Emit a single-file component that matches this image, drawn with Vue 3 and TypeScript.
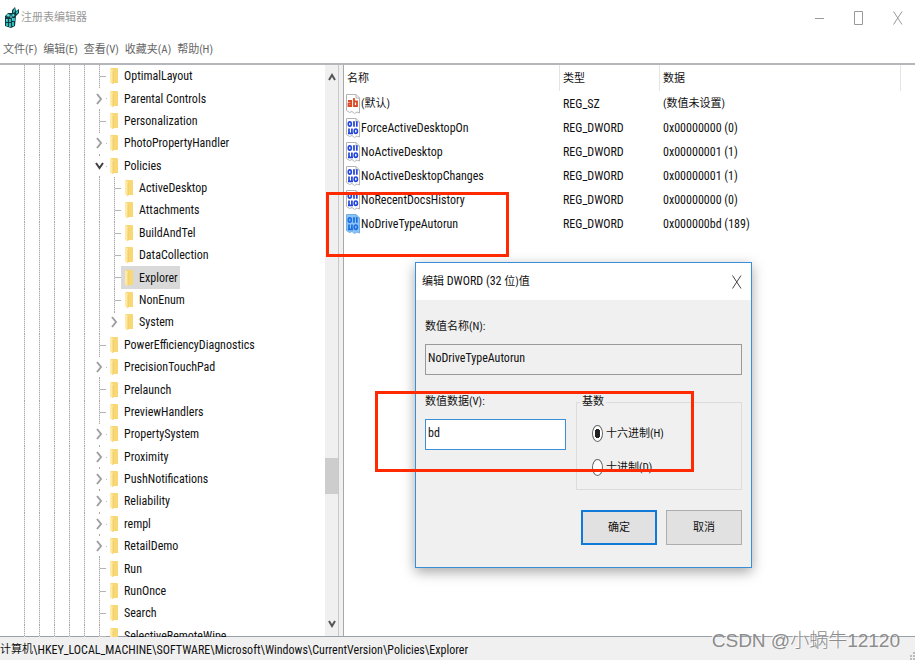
<script setup lang="ts">
import { ref } from 'vue'

interface TreeNode {
  name: string
  depth: number
  state: 'leaf' | 'closed' | 'open'
  last?: boolean
  selected?: boolean
}

interface RegistryValue {
  name: string
  kind: 'text' | 'binary'
  type: string
  data: string
  local?: boolean
  selected?: boolean
}

const menus: string[] = ['文件(F)', '编辑(E)', '查看(V)', '收藏夹(A)', '帮助(H)']

const nodes: TreeNode[] = [
  { name: 'OptimalLayout', depth: 0, state: 'leaf' },
  { name: 'Parental Controls', depth: 0, state: 'closed' },
  { name: 'Personalization', depth: 0, state: 'leaf' },
  { name: 'PhotoPropertyHandler', depth: 0, state: 'closed' },
  { name: 'Policies', depth: 0, state: 'open' },
  { name: 'ActiveDesktop', depth: 1, state: 'leaf' },
  { name: 'Attachments', depth: 1, state: 'leaf' },
  { name: 'BuildAndTel', depth: 1, state: 'leaf' },
  { name: 'DataCollection', depth: 1, state: 'leaf' },
  { name: 'Explorer', depth: 1, state: 'leaf', selected: true },
  { name: 'NonEnum', depth: 1, state: 'leaf' },
  { name: 'System', depth: 1, state: 'closed', last: true },
  { name: 'PowerEfficiencyDiagnostics', depth: 0, state: 'leaf' },
  { name: 'PrecisionTouchPad', depth: 0, state: 'closed' },
  { name: 'Prelaunch', depth: 0, state: 'leaf' },
  { name: 'PreviewHandlers', depth: 0, state: 'leaf' },
  { name: 'PropertySystem', depth: 0, state: 'closed' },
  { name: 'Proximity', depth: 0, state: 'closed' },
  { name: 'PushNotifications', depth: 0, state: 'closed' },
  { name: 'Reliability', depth: 0, state: 'closed' },
  { name: 'rempl', depth: 0, state: 'closed' },
  { name: 'RetailDemo', depth: 0, state: 'closed' },
  { name: 'Run', depth: 0, state: 'leaf' },
  { name: 'RunOnce', depth: 0, state: 'leaf' },
  { name: 'Search', depth: 0, state: 'leaf' },
  { name: 'SelectiveRemoteWipe', depth: 0, state: 'leaf' },
]

const values: RegistryValue[] = [
  { name: '(默认)', kind: 'text', type: 'REG_SZ', data: '(数值未设置)', local: true },
  { name: 'ForceActiveDesktopOn', kind: 'binary', type: 'REG_DWORD', data: '0x00000000 (0)' },
  { name: 'NoActiveDesktop', kind: 'binary', type: 'REG_DWORD', data: '0x00000001 (1)' },
  { name: 'NoActiveDesktopChanges', kind: 'binary', type: 'REG_DWORD', data: '0x00000001 (1)' },
  { name: 'NoRecentDocsHistory', kind: 'binary', type: 'REG_DWORD', data: '0x00000000 (0)' },
  { name: 'NoDriveTypeAutorun', kind: 'binary', type: 'REG_DWORD', data: '0x000000bd (189)', selected: true },
]

const valueName = ref<string>('NoDriveTypeAutorun')
const valueData = ref<string>('bd')
const base = ref<'hex' | 'dec'>('hex')
</script>

<template>
  <div class="window">
    <header class="titlebar">
      <svg class="app-icon" viewBox="0 0 16 22" aria-hidden="true">
        <path d="M1 9 L4 6 L8 6 L8 3 L11 0 L12 4 L15 2 L15 6 L12 9 L11 19 L7 21 L1 19 Z" fill="#123c40" />
        <path d="M2 9l2-2 3 1-2 2zM7 8l2-1 2 1-2 2zM2 12h2v3H2zM5 12h2v3H5zM8 11h3v3H8zM2 16h2v3H2zM5 16h2v4H5zM8 15h2v4H8z" fill="#2cbcc0" />
        <path d="M9 4l2-3 0 4-2 1zM12 5l2-2 0 3-2 1z" fill="#2cbcc0" />
        <path d="M3 8h2M6 10h2M9 8h1M2 13h1M8 12h1" stroke="#a9ecec" />
      </svg>
      <h1 class="caption cn">注册表编辑器</h1>
      <div class="window-buttons">
        <button type="button" aria-label="最小化">
          <svg width="10" height="14" viewBox="0 0 10 14"><path d="M0 7.500H9" /></svg>
        </button>
        <button type="button" aria-label="最大化">
          <svg width="10" height="14" viewBox="0 0 10 14"><path d="M.5 .5H8.500V13.500H.5Z" /></svg>
        </button>
        <button type="button" aria-label="关闭">
          <svg width="10" height="14" viewBox="0 0 10 14"><path d="M.5 .5L9 13.500M9 .5L.5 13.500" /></svg>
        </button>
      </div>
    </header>

    <nav class="menubar cn">
      <button v-for="m in menus" :key="m" type="button">{{ m }}</button>
    </nav>

    <main class="panes">
      <section class="tree-pane">
        <ul class="tree">
          <li v-for="n in nodes" :key="n.name" class="node">
            <span v-for="g in 5 + n.depth" :key="g" class="guide"></span>
            <span class="joint" :class="[n.state, { last: n.last }]">
              <svg v-if="n.state === 'closed'" width="7" height="12" viewBox="0 0 7 12"><path d="M1 1L5 6L1 11" stroke="#a0a0a0" /></svg>
              <svg v-if="n.state === 'open'" width="9" height="8" viewBox="0 0 9 8"><path d="M1 1L4.500 6L8 1" stroke="#404040" /></svg>
            </span>
            <span class="entry" :class="{ selected: n.selected }">
              <svg class="folder" width="9" height="18" viewBox="0 0 9 18" aria-hidden="true">
                <path d="M1 1H7.500L8 2V16H1Z" fill="#f8d775" />
                <path d="M0 1L3 3V17.500L0 15.500Z" fill="#ffe9a6" />
                <path d="M3 4V17" stroke="#edc65c" stroke-width=".7" />
              </svg>
              <span>{{ n.name }}</span>
            </span>
          </li>
        </ul>
        <div class="scrollbar">
          <svg width="8" height="8" viewBox="0 0 8 8"><path d="M1 7L4 2L7 7" /></svg>
          <div class="track"><div class="thumb"></div></div>
          <svg width="8" height="8" viewBox="0 0 8 8"><path d="M1 1L4 6L7 1" /></svg>
        </div>
      </section>

      <section class="list-pane">
        <table>
          <colgroup>
            <col class="c-name" /><col class="c-type" /><col class="c-data" /><col />
          </colgroup>
          <thead>
            <tr class="cn"><th>名称</th><th>类型</th><th>数据</th><th></th></tr>
          </thead>
          <tbody>
            <tr v-for="v in values" :key="v.name">
              <td class="name">
                <div class="value" :class="{ cn: v.local }">
                  <svg class="vicon" width="14" height="20" viewBox="0 0 14 20" aria-hidden="true">
                    <path d="M.5 .5H10L13.500 4V19L11 18L8.500 19.500L6 17.500L3.500 18.500L.5 16.500Z" :fill="v.selected ? '#8cc4f5' : '#fff'" :stroke="v.selected ? '#70aee6' : '#b4b4b4'" />
                    <path d="M10 .5V4H13.500" fill="none" :stroke="v.selected ? '#70aee6' : '#b4b4b4'" />
                    <g v-if="v.kind === 'text'" fill="none" stroke="#dc4a26" stroke-width="1.800">
                      <path d="M2 7H5.200V12H2.500V9.500H5M8 4V12H11V7.500H8" />
                    </g>
                    <g v-else fill="none" :stroke="v.selected ? '#1c6ee0' : '#2446d8'" stroke-width="1.700">
                      <ellipse cx="3.800" cy="6" rx="1.500" ry="2.200" />
                      <path d="M8 3.200V8.800M10.800 3.200V8.800M7 4H8M3 10.500V16M5.900 10.500V16M2 15.300H7" />
                      <ellipse cx="9.800" cy="13.200" rx="1.600" ry="2.200" />
                    </g>
                  </svg>
                  <span>{{ v.name }}</span>
                </div>
              </td>
              <td>{{ v.type }}</td>
              <td :class="{ cn: v.local }">{{ v.data }}</td>
              <td></td>
            </tr>
          </tbody>
        </table>
      </section>
    </main>

    <footer class="statusbar">
      <span class="cn">计算机</span><span>\HKEY_LOCAL_MACHINE\SOFTWARE\Microsoft\Windows\CurrentVersion\Policies\Explorer</span>
      <svg class="grip" width="6" height="8" viewBox="0 0 6 8" aria-hidden="true"><path d="M4 0h2v2H4zM4 3h2v2H4zM4 6h2v2H4zM1 3h2v2H1zM1 6h2v2H1z" fill="#bcbcbc" /></svg>
    </footer>

    <form class="dialog" role="dialog" aria-labelledby="dialog-title" @submit.prevent>
      <div class="dialog-title">
        <h2 id="dialog-title"><span class="cn">编辑</span> DWORD (32 <span class="cn">位)值</span></h2>
        <button type="button" aria-label="关闭">
          <svg width="10" height="14" viewBox="0 0 10 14"><path d="M.5 .5L9 13.500M9 .5L.5 13.500" /></svg>
        </button>
      </div>
      <div class="dialog-body">
        <div class="field">
          <label class="cn" for="value-name">数值名称(N):</label>
          <input id="value-name" v-model="valueName" type="text" readonly />
        </div>
        <div class="columns">
          <div class="field data-field">
            <label class="cn" for="value-data">数值数据(V):</label>
            <input id="value-data" v-model="valueData" class="active" type="text" />
          </div>
          <fieldset class="cn">
            <legend>基数</legend>
            <label><input v-model="base" type="radio" name="base" value="hex" />十六进制(H)</label>
            <label><input v-model="base" type="radio" name="base" value="dec" />十进制(D)</label>
          </fieldset>
        </div>
        <div class="actions cn">
          <button class="primary" type="submit">确定</button>
          <button type="button">取消</button>
        </div>
      </div>
    </form>

    <div class="mark mark-value"></div>
    <div class="mark mark-data"></div>
    <div class="watermark">CSDN @小蜗牛12120</div>
  </div>
</template>

<style>
body {
  margin: 0;
  background: #fff;
}
</style>

<style scoped>
.window {
  position: relative;
  display: flex;
  flex-direction: column;
  height: 100vh;
  overflow: hidden;
  box-sizing: border-box;
  font-family: 'Roboto Condensed', Roboto, 'Noto Sans CJK SC', sans-serif;
  font-size: 12px;
  line-height: 16px;
  color: #111;
}

.cn {
  font-size: 11px;
}

button {
  padding: 0;
  border: 0;
  background: none;
  font: inherit;
  color: inherit;
}

h1,
h2 {
  margin: 0;
  font-size: 12px;
  font-weight: 400;
}

h1.cn {
  font-size: 11px;
}

.titlebar {
  display: flex;
  align-items: center;
  flex: none;
  height: 35px;
  padding-left: 4px;
}

.app-icon {
  width: 16px;
  height: 22px;
  margin-right: 1px;
}

.caption {
  flex: 1;
  color: #999;
}

.window-buttons {
  display: flex;
  padding-right: 12px;
  gap: 29px;
}

.window-buttons svg,
.dialog-title svg {
  display: block;
  fill: none;
  stroke: #999;
}

.menubar {
  display: flex;
  flex: none;
  align-items: center;
  gap: 6px;
  height: 26px;
  padding: 2px 0 0 3px;
  color: #666;
}

.panes {
  display: flex;
  flex: 1;
  min-height: 0;
  border-top: 2px solid #b4b6ba;
  border-bottom: 1px solid #9aa0aa;
  background: #f0f0f0;
}

.tree-pane {
  display: flex;
  flex: none;
  width: 338px;
  border-right: 1px solid #c8c8c8;
  background: #fff;
}

.tree {
  display: grid;
  flex: 1;
  grid-auto-rows: 1fr;
  min-width: 0;
  height: calc(100% + 11px);
  margin: 0;
  padding: 0 0 0 17px;
  list-style: none;
}

.node {
  display: flex;
  min-height: 0;
  line-height: 22px;
}

.guide,
.joint {
  flex: none;
  width: 15px;
  background: repeating-linear-gradient(#a8a8a8 0 1px, #e4e4e4 1px 2px) 7px 0 / 1px 100% no-repeat;
}

.joint {
  display: flex;
  align-items: center;
  justify-content: center;
}

.joint.leaf {
  background:
    linear-gradient(#b4b4b4, #b4b4b4) 8px 11px / 6px 1px no-repeat,
    repeating-linear-gradient(#a8a8a8 0 1px, #e4e4e4 1px 2px) 7px 0 / 1px 100% no-repeat;
}

.joint.closed,
.joint.open {
  background:
    linear-gradient(#c0c0c0, #c0c0c0) 14px 11px / 1px 1px no-repeat,
    linear-gradient(#a8a8a8, #a8a8a8) 7px 0 / 1px 1px no-repeat,
    linear-gradient(#a8a8a8, #a8a8a8) 7px 100% / 1px 1px no-repeat;
}

.joint.last {
  background: linear-gradient(#a8a8a8, #a8a8a8) 7px 0 / 1px 2px no-repeat;
}

.joint svg {
  fill: none;
  stroke-width: 2;
}

.entry {
  display: flex;
  align-items: center;
  gap: 5px;
  padding: 0 2px 0 3px;
  white-space: nowrap;
}

.entry.selected {
  margin-left: -1px;
  padding-left: 4px;
  background: #d9d9d9;
}

.folder {
  flex: none;
}

.scrollbar {
  display: flex;
  flex: none;
  flex-direction: column;
  align-items: center;
  width: 13px;
  padding: 8px 0;
  background: #f0f0f0;
}

.scrollbar svg {
  fill: none;
  stroke: #555;
  stroke-width: 2;
}

.track {
  display: flex;
  flex: 1;
  flex-direction: column;
  justify-content: flex-end;
  align-self: stretch;
}

.thumb {
  height: 36px;
  margin-bottom: 126px;
  background: #cdcdcd;
}

.list-pane {
  flex: 1;
  min-width: 0;
  margin-left: 4px;
  border-left: 1px solid #a8a8a8;
  background: #fff;
}

table {
  width: 100%;
  table-layout: fixed;
  border-collapse: separate;
  border-spacing: 0;
}

.c-name {
  width: 216px;
}

.c-type {
  width: 100px;
}

.c-data {
  width: 241px;
}

th {
  height: 24px;
  padding: 2px 0 0 3px;
  border-right: 1px solid #e4e4e4;
  font-weight: 400;
  text-align: left;
}

th:last-child {
  border-right: 0;
}

td {
  height: 22px;
  padding: 2px 0 0 3px;
  white-space: nowrap;
}

td.name {
  padding-left: 2px;
}

.value {
  display: flex;
  align-items: center;
  gap: 1px;
}

.vicon {
  flex: none;
}

.statusbar {
  display: flex;
  flex: none;
  align-items: center;
  box-sizing: border-box;
  height: 23px;
  padding-top: 3px;
  background: #f0f0f0;
  white-space: nowrap;
}

.grip {
  align-self: flex-end;
  margin-left: auto;
}

.dialog {
  position: absolute;
  top: 262px;
  left: 415px;
  width: 335px;
  border: 1px solid #3a8fd6;
  background: #f0f0f0;
  box-shadow: 0 4px 12px rgba(0, 0, 0, 0.35);
}

.dialog-title {
  display: flex;
  align-items: center;
  justify-content: space-between;
  height: 37px;
  padding: 0 9px 0 6px;
  background: #fff;
}

.dialog-title svg {
  stroke: #444;
}

.dialog-body {
  padding: 19px 9px 22px;
}

.field {
  display: flex;
  flex-direction: column;
  gap: 9px;
}

.field input {
  box-sizing: border-box;
  width: 100%;
  height: 31px;
  padding: 0 2px 4px;
  border: 1px solid #999;
  border-radius: 0;
  outline: 0;
  background: #f0f0f0;
  font: inherit;
  color: inherit;
}

.field input.active {
  border-color: #3a8fd6;
  background: #fff;
}

.columns {
  display: flex;
  gap: 10px;
  margin-top: 19px;
}

.data-field {
  flex: none;
  width: 141px;
}

fieldset {
  display: flex;
  flex: 1;
  flex-direction: column;
  gap: 17px;
  min-width: 0;
  margin: 0;
  padding: 15px 0 13px 15px;
  border: 1px solid #dcdcdc;
}

legend {
  margin-left: -12px;
  padding: 0 2px;
}

fieldset label {
  display: flex;
  align-items: center;
  gap: 3px;
}

input[type='radio'] {
  appearance: none;
  box-sizing: border-box;
  width: 11px;
  height: 17px;
  margin: 0;
  border: 1px solid #666;
  border-radius: 50%;
  background: #fff;
}

input[type='radio']:checked {
  background: radial-gradient(3px 5px at center, #222 90%, #fff 100%);
}

.actions {
  display: flex;
  justify-content: flex-end;
  gap: 9px;
  margin-top: 20px;
}

.actions button {
  box-sizing: border-box;
  width: 76px;
  height: 35px;
  border: 1px solid #adadad;
  background: #e1e1e1;
}

.actions .primary {
  border: 2px solid #0f7ad8;
}

.mark {
  position: absolute;
  box-sizing: border-box;
  border: 3px solid #ff2a00;
  pointer-events: none;
}

.mark-value {
  top: 192px;
  left: 326px;
  width: 183px;
  height: 65px;
}

.mark-data {
  top: 391px;
  left: 375px;
  width: 319px;
  height: 81px;
}

.watermark {
  position: absolute;
  right: 15px;
  bottom: 6px;
  font-family: 'Liberation Sans', 'Noto Sans CJK SC', sans-serif;
  font-size: 19px;
  font-weight: 300;
  line-height: 26px;
  color: #8c8c8c;
  text-shadow: -1px -1px 0 #fff;
  white-space: nowrap;
}
</style>
